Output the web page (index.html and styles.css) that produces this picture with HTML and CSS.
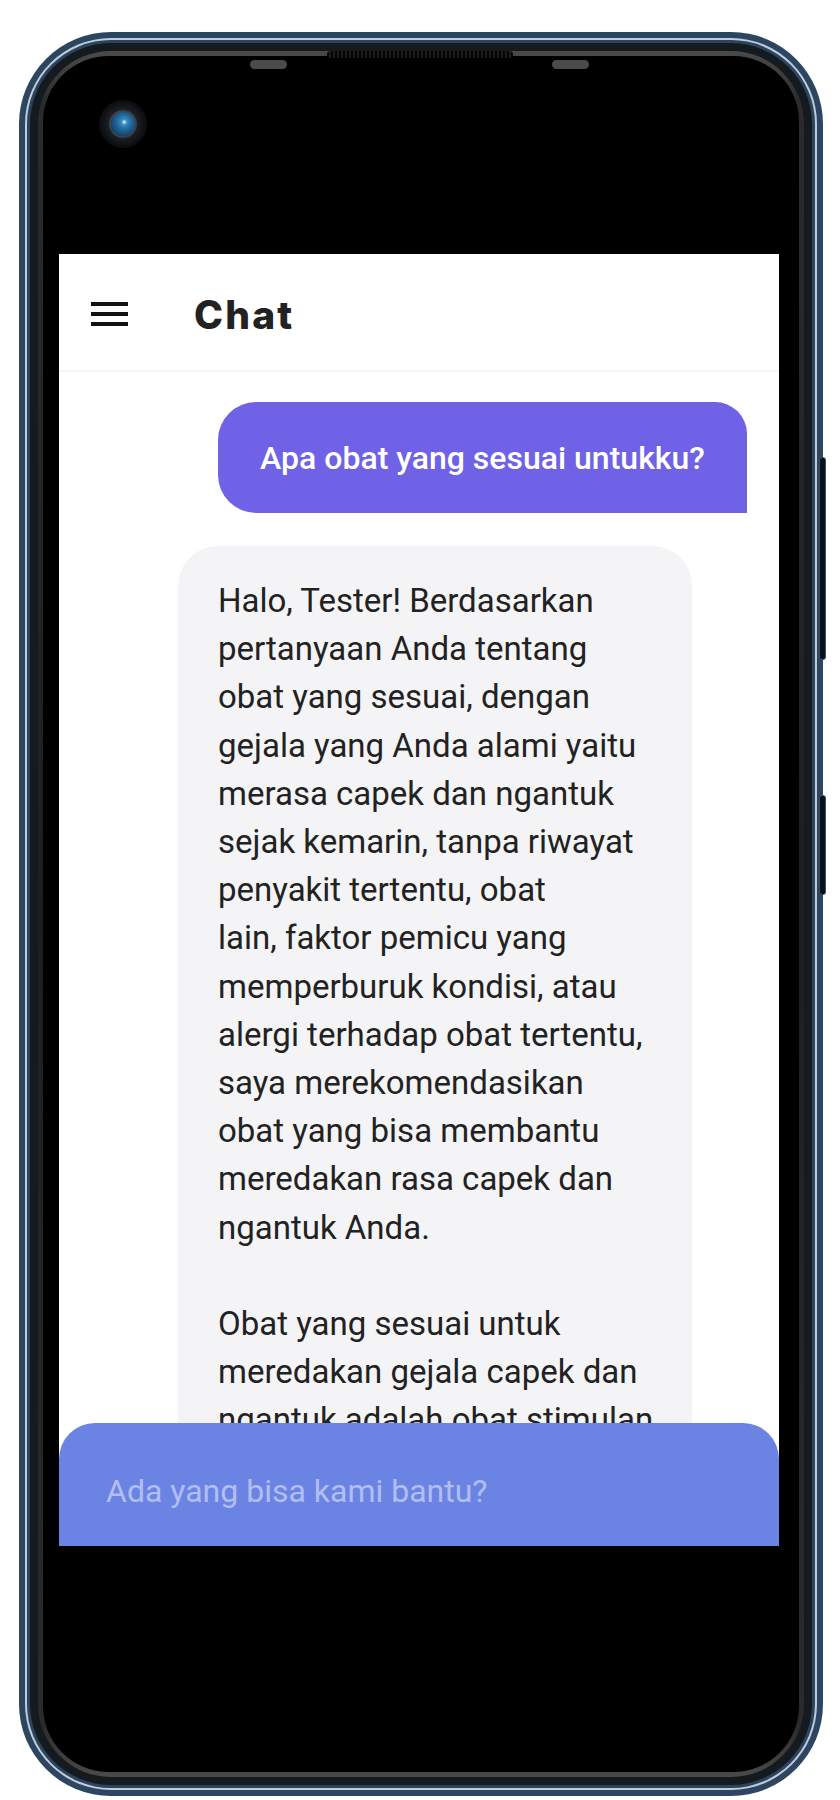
FILE: index.html
```html
<!DOCTYPE html>
<html lang="id">
<head>
<meta charset="utf-8">
<title>Chat</title>
<link rel="stylesheet" href="styles.css">
</head>
<body>
<div class="phone">
  <div class="speaker"></div>
  <div class="sensor sensor-left"></div>
  <div class="sensor sensor-right"></div>
  <div class="side-btn btn-power"></div>
  <div class="side-btn btn-volume"></div>
  <div class="frame-line">
    <div class="frame-inner">
      <div class="frame-dark">
        <div class="frame-rim">
          <div class="bezel">
            <div class="camera"><div class="lens"></div></div>
            <div class="screen">
              <header class="app-header">
                <button class="menu-btn" aria-label="Menu">
                  <span></span><span></span><span></span>
                </button>
                <h1 class="title">Chat</h1>
              </header>
              <main class="messages">
                <div class="bubble bubble-user">Apa obat yang sesuai untukku?</div>
                <div class="bubble bubble-bot">Halo, Tester! Berdasarkan
pertanyaan Anda tentang
obat yang sesuai, dengan
gejala yang Anda alami yaitu
merasa capek dan ngantuk
sejak kemarin, tanpa riwayat
penyakit tertentu, obat
lain, faktor pemicu yang
memperburuk kondisi, atau
alergi terhadap obat tertentu,
saya merekomendasikan
obat yang bisa membantu
meredakan rasa capek dan
ngantuk Anda.

Obat yang sesuai untuk
meredakan gejala capek dan
ngantuk adalah obat stimulan</div>
              </main>
              <div class="composer">
                <span class="placeholder">Ada yang bisa kami bantu?</span>
              </div>
            </div>
          </div>
        </div>
      </div>
    </div>
  </div>
</div>
</body>
</html>
```

FILE: styles.css
```css
* { box-sizing: border-box; }

html, body {
  margin: 0;
  padding: 0;
  background: #ffffff;
}

body {
  width: 840px;
  height: 1800px;
  overflow: hidden;
  font-family: Roboto, "Liberation Sans", sans-serif;
}

/* ---------- phone body ---------- */
.phone {
  position: relative;
  margin: 32px 0 0 19px;
  width: 804px;
  height: 1764px;
  border-radius: 92px;
  background: #2c4561;
  padding: 6px;
}

.frame-line {
  height: 100%;
  border-radius: 86px;
  background: #c3ccd6;
  padding: 2px;
}

.frame-inner {
  height: 100%;
  border-radius: 84px;
  background: #2a4460;
  padding: 3px;
}

.frame-dark {
  height: 100%;
  border-radius: 81px;
  background: #151a1f;
  padding: 8px;
}

.frame-rim {
  height: 100%;
  border-radius: 73px;
  background: linear-gradient(180deg, #4a4a4a 0%, #2b2b2b 3%, #1e1e1e 50%, #2b2b2b 97%, #4a4a4a 100%);
  padding: 5px;
}

.bezel {
  position: relative;
  height: 100%;
  border-radius: 66px;
  background: #000000;
  padding: 198px 0 0 16px;
}

.speaker {
  position: absolute;
  left: 308px;
  top: 19px;
  width: 186px;
  height: 7px;
  border-radius: 4px;
  background: repeating-linear-gradient(90deg, #050505 0 2px, #1c1c1c 2px 4px);
  z-index: 2;
}

.sensor {
  position: absolute;
  top: 28px;
  width: 37px;
  height: 9px;
  border-radius: 5px;
  background: #4b4b4b;
  z-index: 2;
}
.sensor-left { left: 231px; }
.sensor-right { left: 533px; }

.side-btn {
  position: absolute;
  left: 800px;
  width: 7px;
  border-radius: 3px;
  background: #0d1014;
  border: 1px solid #3a536d;
}
.btn-power { top: 425px; height: 203px; }
.btn-volume { top: 763px; height: 100px; }

.camera {
  position: absolute;
  left: 56px;
  top: 44px;
  width: 48px;
  height: 48px;
  border-radius: 50%;
  background: radial-gradient(circle, #1b1f24 0 44%, #0d0f12 64%, #030303 100%);
  display: flex;
  align-items: center;
  justify-content: center;
}
.lens {
  width: 28px;
  height: 28px;
  border-radius: 50%;
  border: 2px solid #3a4148;
  background: radial-gradient(circle at 55% 42%, #a4dcf5 0 6%, #3a8ac0 14%, #23689c 38%, #154570 70%, #0a2238 100%);
}

/* ---------- app screen ---------- */
.screen {
  width: 720px;
  height: 1292px;
  background: #ffffff;
  display: flex;
  flex-direction: column;
  overflow: hidden;
}

.app-header {
  height: 118px;
  flex: none;
  display: flex;
  align-items: center;
  padding: 4px 0 0 32px;
  border-bottom: 2px solid #f6f6f6;
}

.menu-btn {
  width: 37px;
  height: 24px;
  padding: 0;
  border: 0;
  background: transparent;
  display: flex;
  flex-direction: column;
  justify-content: space-between;
}
.menu-btn span {
  display: block;
  height: 4px;
  width: 100%;
  background: #111111;
}

.title {
  margin: 0 0 0 66px;
  font-family: Inter, "Noto Sans", sans-serif;
  font-weight: 800;
  font-size: 39px;
  letter-spacing: 2.2px;
  color: #222222;
}

.messages {
  flex: 1;
  overflow: hidden;
  display: flex;
  flex-direction: column;
  padding-top: 30px;
}

.bubble-user {
  flex: none;
  align-self: flex-end;
  margin-right: 32px;
  width: 529px;
  height: 111px;
  display: flex;
  align-items: center;
  justify-content: center;
  background: #6f62e6;
  color: #ffffff;
  font-size: 32px;
  font-weight: 500;
  border-radius: 38px 32px 0 38px;
}

.bubble-bot {
  flex: none;
  margin: 33px 0 0 119px;
  width: 514px;
  padding: 31px 10px 0 40px;
  background: #f4f4f6;
  color: #222222;
  font-size: 33px;
  border-radius: 40px 40px 0 0;
  line-height: 48.2px;
  white-space: pre-line;
}

.composer {
  flex: none;
  height: 123px;
  background: #6b84e4;
  border-radius: 36px 36px 0 0;
  display: flex;
  align-items: center;
  padding: 12px 0 0 47px;
}

.placeholder {
  font-size: 32px;
  color: #b2bef1;
}
```
